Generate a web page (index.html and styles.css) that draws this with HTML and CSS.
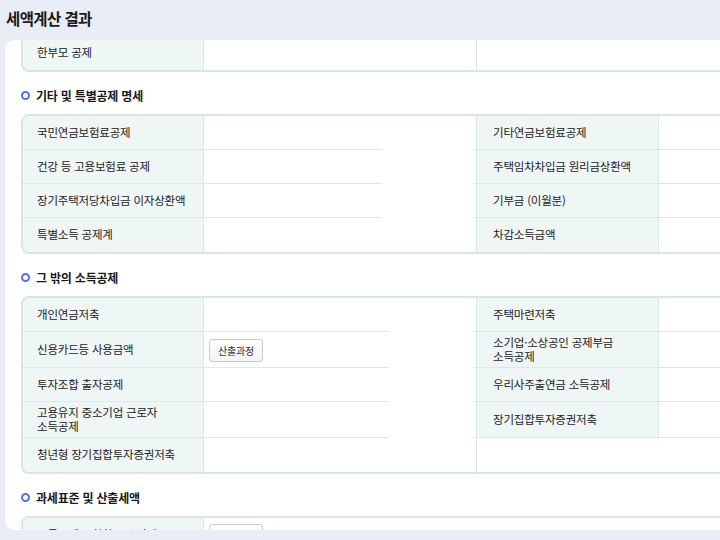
FILE: index.html
```html
<!DOCTYPE html>
<html lang="ko">
<head>
<meta charset="utf-8">
<title>세액계산 결과</title>
<link rel="stylesheet" href="styles.css">
</head>
<body>
<div class="page">
  <h1 class="title">세액계산 결과</h1>
  <div class="card">
    <div class="content">
      <div class="tbl cut">
        <div class="row last">
          <div class="lab">한부모 공제</div>
          <div class="val"></div>
          <div class="blank"></div>
        </div>
      </div>

      <h2 class="sec"><span class="dot"></span>기타 및 특별공제 명세</h2>
      <div class="tbl">
        <div class="row">
          <div class="lab">국민연금보험료공제</div>
          <div class="val"></div>
          <div class="lab r">기타연금보험료공제</div>
          <div class="val r"></div>
        </div>
        <div class="row">
          <div class="lab">건강 등 고용보험료 공제</div>
          <div class="val"></div>
          <div class="lab r">주택임차차입금 원리금상환액</div>
          <div class="val r"></div>
        </div>
        <div class="row">
          <div class="lab">장기주택저당차입금 이자상환액</div>
          <div class="val"></div>
          <div class="lab r">기부금 (이월분)</div>
          <div class="val r"></div>
        </div>
        <div class="row last">
          <div class="lab">특별소득 공제계</div>
          <div class="val"></div>
          <div class="lab r">차감소득금액</div>
          <div class="val r"></div>
        </div>
      </div>

      <h2 class="sec"><span class="dot"></span>그 밖의 소득공제</h2>
      <div class="tbl wide">
        <div class="row">
          <div class="lab">개인연금저축</div>
          <div class="val"></div>
          <div class="lab r">주택마련저축</div>
          <div class="val r"></div>
        </div>
        <div class="row">
          <div class="lab">신용카드등 사용금액</div>
          <div class="val"><button class="btn" type="button">산출과정</button></div>
          <div class="lab r">소기업·소상공인 공제부금<br>소득공제</div>
          <div class="val r"></div>
        </div>
        <div class="row">
          <div class="lab">투자조합 출자공제</div>
          <div class="val"></div>
          <div class="lab r">우리사주출연금 소득공제</div>
          <div class="val r"></div>
        </div>
        <div class="row">
          <div class="lab">고용유지 중소기업 근로자<br>소득공제</div>
          <div class="val"></div>
          <div class="lab r">장기집합투자증권저축</div>
          <div class="val r"></div>
        </div>
        <div class="row last">
          <div class="lab">청년형 장기집합투자증권저축</div>
          <div class="val"></div>
          <div class="blank"></div>
        </div>
      </div>

      <h2 class="sec"><span class="dot"></span>과세표준 및 산출세액</h2>
      <div class="tbl">
        <div class="row">
          <div class="lab">소득공제 종합한도 초과액</div>
          <div class="val"><button class="btn" type="button">산출과정</button></div>
          <div class="blank plain"></div>
        </div>
      </div>
    </div>
  </div>
</div>
</body>
</html>
```

FILE: styles.css
```css
html, body {
  margin: 0;
  padding: 0;
  background: #e9edf5;
  overflow: hidden;
}

body {
  font-family: "Noto Sans CJK KR", "Noto Sans", sans-serif;
  color: #222222;
  width: 720px;
  height: 540px;
}

.page {
  width: 960px;
}

.title {
  margin: 0;
  height: 40px;
  box-sizing: border-box;
  padding: 0 0 5px 6px;
  display: flex;
  align-items: center;
  font-size: 15.5px;
  font-weight: 700;
  letter-spacing: -0.6px;
  color: #1a1a1a;
}

.card {
  margin-left: 5px;
  width: 950px;
  height: 490px;
  background: #ffffff;
  border-radius: 10px 0 0 10px;
  overflow: hidden;
}

.content {
  padding: 0 16px;
}

.tbl {
  width: 913px;
  box-sizing: border-box;
  border: 2px solid #d8e5e8;
  border-right: none;
  border-radius: 8px 0 0 8px;
  overflow: hidden;
  --line: 178px;
}

.tbl.wide {
  --line: 185px;
}

.tbl.cut {
  border-top: none;
  border-top-left-radius: 0;
  margin-top: -4px;
}

.row {
  display: grid;
  grid-template-columns: 181px 272px 183px 273px;
  min-height: 34px;
}

.lab,
.val,
.blank {
  box-sizing: border-box;
  display: flex;
  align-items: center;
  font-size: 11.5px;
  line-height: 13.5px;
  letter-spacing: -0.2px;
}

.lab {
  background: #eff6f6;
  padding: 4px 14px;
  border-right: 1px solid #dbe8eb;
  border-bottom: 1px solid #dbe8eb;
}

.lab.r {
  border-left: 1px solid #dbe8eb;
  padding-left: 16px;
}

.val {
  padding: 4px 5px;
  background-image:
    linear-gradient(#dbe8eb, #dbe8eb),
    linear-gradient(#dbe8eb, #dbe8eb);
  background-repeat: no-repeat;
  background-size: var(--line) 1px, 3px 1px;
  background-position: left bottom, right bottom;
}

.val.r {
  background-size: 100% 1px, 0 0;
}

.blank {
  grid-column: span 2;
  border-left: 1px solid #dbe8eb;
  background: #ffffff;
}

.blank.plain {
  border-left: none;
}

.row.last .lab {
  border-bottom: none;
}

.row.last .val {
  background-image: none;
}

.sec {
  margin: 15px 0 9px;
  height: 18px;
  box-sizing: border-box;
  padding-bottom: 1px;
  display: flex;
  align-items: center;
  gap: 6px;
  font-size: 12px;
  font-weight: 700;
  letter-spacing: -0.2px;
  color: #1a1a1a;
}

.dot {
  width: 9px;
  height: 9px;
  box-sizing: border-box;
  border: 2.3px solid #4f74dc;
  border-radius: 50%;
  flex: none;
}

.btn {
  height: 23px;
  padding: 0 8px;
  border: 1px solid #c9cccf;
  border-radius: 3px;
  background: linear-gradient(#ffffff, #f2f3f4);
  font-family: "Noto Sans CJK KR", "Noto Sans", sans-serif;
  font-size: 10px;
  letter-spacing: -0.2px;
  color: #333333;
}
```
